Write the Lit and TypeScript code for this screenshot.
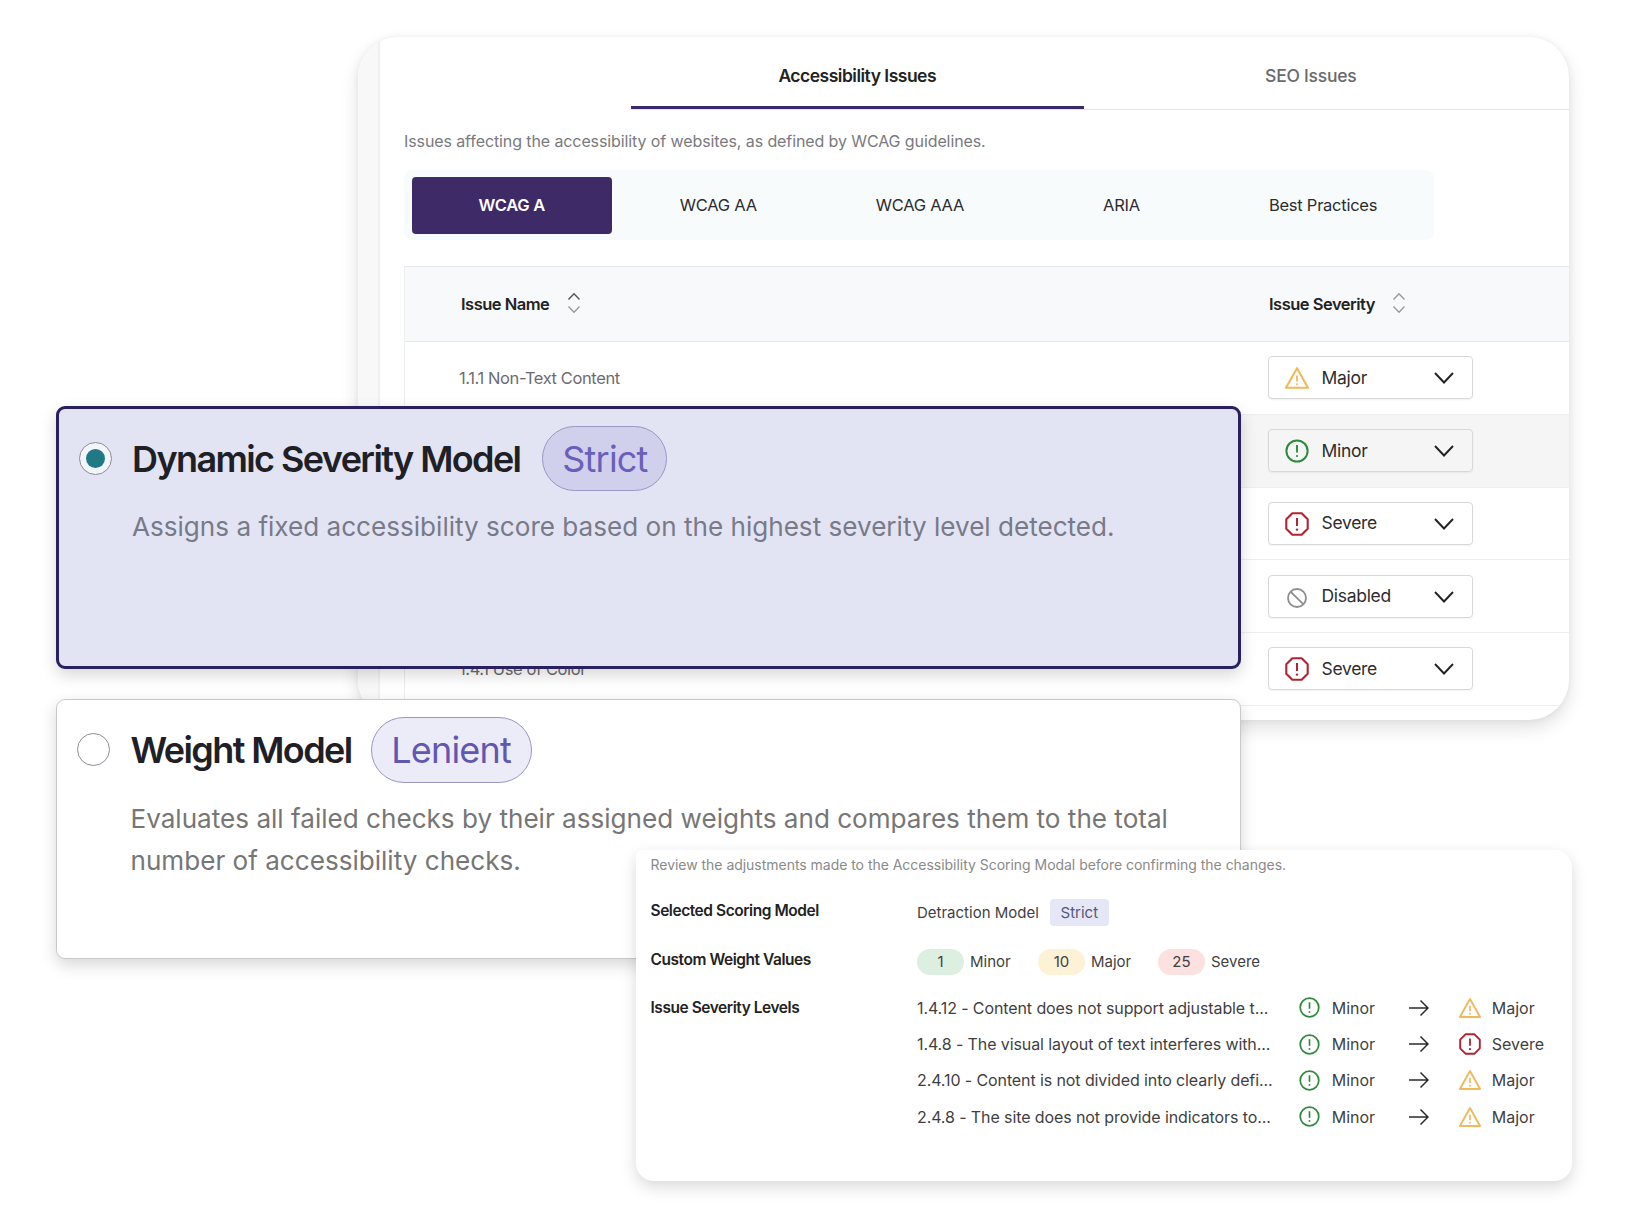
import { LitElement, html, css, svg } from "lit";
import { customElement } from "lit/decorators.js";

type Sev = "Major" | "Minor" | "Severe" | "Disabled";

const icon = (s: Sev, size: number) => {
  const c: Record<Sev, ReturnType<typeof svg>> = {
    Major: svg`<path d="M12 2.2 L23 21.8 H1 Z" fill="none" stroke="#f0b95c" stroke-width="2.1" stroke-linejoin="round"/><path d="M12 9.5V15.5" stroke="#f0b95c" stroke-width="1.8"/><circle cx="12" cy="18.3" r="1" fill="#f0b95c"/>`,
    Minor: svg`<circle cx="12" cy="12" r="10.6" fill="none" stroke="#2f8a3c" stroke-width="2"/><path d="M12 6V13.5" stroke="#2f8a3c" stroke-width="1.9"/><circle cx="12" cy="17" r="1.1" fill="#2f8a3c"/>`,
    Severe: svg`<path d="M7.3 1.3h9.4l6 6v9.4l-6 6H7.3l-6-6V7.3z" fill="none" stroke="#b3232f" stroke-width="2.1" stroke-linejoin="round"/><path d="M12 6V14" stroke="#b3232f" stroke-width="2"/><circle cx="12" cy="17.6" r="1.2" fill="#b3232f"/>`,
    Disabled: svg`<circle cx="12" cy="13" r="9" fill="none" stroke="#8f8f8f" stroke-width="1.8"/><path d="M5.8 6.8L18.2 19.2" stroke="#8f8f8f" stroke-width="1.8"/>`,
  };
  return html`<svg class="ic" width=${size} height=${size} viewBox="0 0 24 24">${c[s]}</svg>`;
};

const sortIcon = (top: string) =>
  html`<svg class="sort" width="14" height="22" viewBox="0 0 14 22" fill="none"><path d="M1.5 7.5L7 1.8L12.5 7.5" stroke=${top} stroke-width="1.4"/><path d="M1.5 14.5L7 20.2L12.5 14.5" stroke="#9a9a9a" stroke-width="1.4"/></svg>`;

const chevron = html`<svg class="chev" width="20" height="12" viewBox="0 0 20 12" fill="none"><path d="M1 1L10 10.5L19 1" stroke="#222" stroke-width="1.9"/></svg>`;

const arrow = html`<svg width="20" height="18" viewBox="0 0 20 18" fill="none"><path d="M0 9H19M11.5 1.5L19 9L11.5 16.5" stroke="#2b2b2b" stroke-width="1.5"/></svg>`;

const tableRows: { name: string; sev: Sev; hover?: boolean }[] = [
  { name: "1.1.1 Non-Text Content", sev: "Major" },
  { name: "", sev: "Minor", hover: true },
  { name: "", sev: "Severe" },
  { name: "", sev: "Disabled" },
  { name: "1.4.1 Use of Color", sev: "Severe" },
];

const levels: { text: string; to: Sev }[] = [
  { text: "1.4.12 - Content does not support adjustable t...", to: "Major" },
  { text: "1.4.8 - The visual layout of text interferes with...", to: "Severe" },
  { text: "2.4.10 - Content is not divided into clearly defi...", to: "Major" },
  { text: "2.4.8 - The site does not provide indicators to...", to: "Major" },
];

@customElement("app-root")
export class AppRoot extends LitElement {
  static styles = css`
    :host {
      display: block;
      position: relative;
      width: 1630px;
      height: 1230px;
      background: #fff;
      overflow: hidden;
      font-family: Inter, "Liberation Sans", sans-serif;
      color: #222;
    }
    .back {
      position: absolute;
      left: 358px;
      top: 37px;
      width: 1211px;
      height: 683px;
      background: #fff;
      border-radius: 40px;
      overflow: hidden;
      display: flex;
      box-shadow: 0 8px 18px rgba(0, 0, 0, 0.12), 0 0 6px rgba(0, 0, 0, 0.06);
    }
    .strip {
      width: 20px;
      flex: none;
      background: #f8f8f8;
      border-right: 2px solid #f0f0f0;
    }
    .main { flex: 1; min-width: 0; }
    .tabs {
      margin-left: 250.5px;
      height: 72px;
      display: flex;
      border-bottom: 1px solid #e4e4e6;
    }
    .tab {
      width: 453.5px;
      height: 71.5px;
      display: flex;
      align-items: center;
      justify-content: center;
      padding-top: 5px;
      box-sizing: border-box;
      font-size: 17.5px;
      letter-spacing: -0.25px;
      color: #6a6a6a;
      font-weight: 500;
    }
    .tab.on {
      color: #222;
      font-weight: 600;
      letter-spacing: -0.5px;
      padding-top: 8px;
      border-bottom: 3px solid #3b2a6b;
    }
    .desc {
      margin: 21px 0 0 24px;
      line-height: 20px;
      font-size: 16px;
      letter-spacing: -0.1px;
      color: #7a7a7e;
    }
    .seg {
      margin: 19px 0 0 24px;
      width: 1030px;
      height: 70px;
      box-sizing: border-box;
      padding: 7px 10px 6px 8px;
      background: #f8fbfc;
      border-radius: 8px;
      display: flex;
    }
    .seg div {
      width: 201.6px;
      display: flex;
      align-items: center;
      justify-content: center;
      padding-bottom: 2px;
      box-sizing: border-box;
      font-size: 16.5px;
      letter-spacing: -0.25px;
      color: #2c2c30;
    }
    .seg .on {
      width: 199.5px;
      margin-right: 6px;
      background: #3f2a68;
      color: #fff;
      font-weight: 600;
      border-radius: 4px;
    }
    .table {
      margin: 26px 0 0 24px;
      border-top: 1px solid #e6e7ea;
      border-left: 1px solid #eceded;
    }
    .thead {
      height: 74px;
      background: #f8f9fb;
      border-bottom: 1px solid #e6e7ea;
      display: grid;
      grid-template-columns: 864px 1fr;
      align-items: center;
      font-size: 16.5px;
      font-weight: 600;
      letter-spacing: -0.5px;
    }
    .th { display: flex; align-items: center; }
    .th:first-child { padding-left: 56px; }
    .th .sort { margin-left: 17px; margin-top: -2px; }
    .th:first-child .sort { margin-left: 18px; }
    .row {
      height: 71.75px;
      border-bottom: 1px solid #eeeef0;
      display: grid;
      grid-template-columns: 862.5px 205px;
      align-items: center;
      font-size: 16.5px;
      letter-spacing: -0.4px;
      color: #6c6c70;
    }
    .row.hover { background: #f5f5f6; }
    .row .name { padding-left: 54px; }
    .dd {
      height: 43px;
      box-sizing: border-box;
      display: flex;
      align-items: center;
      border: 1px solid #d8d8da;
      border-radius: 4px;
      box-shadow: 0 1px 2px rgba(0, 0, 0, 0.06);
      font-size: 17.5px;
      letter-spacing: -0.3px;
      color: #2d2d2f;
      position: relative;
      padding-left: 53px;
    }
    .dd .slot {
      position: absolute;
      left: 16px;
      top: 9px;
      width: 24px;
      height: 24px;
    }
    .dd span { margin-top: -1px; }
    .dd .chev { position: absolute; right: 18px; top: 15px; }

    .card {
      position: absolute;
      left: 56px;
      width: 1185px;
      box-sizing: border-box;
      border-radius: 9px;
      box-shadow: 0 6px 16px rgba(0, 0, 0, 0.16);
    }
    .card.a {
      top: 406px;
      height: 263px;
      background: #e2e4f3;
      border: 3px solid #2a1f5f;
      padding: 17px 0 0 73px;
    }
    .card.b {
      top: 699px;
      height: 260px;
      background: #fff;
      border: 1.5px solid #c9c9c9;
      padding: 17px 0 0 73.5px;
    }
    .radio {
      position: absolute;
      width: 33px;
      height: 33px;
      box-sizing: border-box;
      border-radius: 50%;
      border: 1.5px solid #8b8d94;
      display: flex;
      align-items: center;
      justify-content: center;
    }
    .a .radio { left: 20px; top: 33px; background: #f4f5fb; }
    .b .radio { left: 20px; top: 33px; background: #fff; }
    .radio i {
      width: 19px;
      height: 19px;
      border-radius: 50%;
      background: #1f7a85;
    }
    .head { display: flex; align-items: center; }
    .title {
      font-size: 36px;
      font-weight: 600;
      letter-spacing: -1.6px;
      color: #1f2026;
      line-height: 44px;
    }
    .tag {
      box-sizing: border-box;
      height: 65px;
      border-radius: 33px;
      border: 1.5px solid #9a97c6;
      display: flex;
      align-items: center;
      justify-content: center;
      font-size: 36px;
      letter-spacing: -0.8px;
    }
    .tag.strict {
      margin-left: 22px;
      width: 125px;
      background: #d1d0ec;
      color: #6a5fbb;
    }
    .tag.lenient {
      margin-left: 19px;
      width: 161px;
      height: 66px;
      background: #ecebf8;
      color: #6157b0;
    }
    .cdesc {
      font-size: 26.1px;
      line-height: 42px;
      color: #787a88;
    }
    .a .cdesc { margin-top: 15px; }
    .b .cdesc { margin-top: 15px; color: #767676; max-width: 1060px; }

    .review {
      position: absolute;
      left: 636px;
      top: 850px;
      width: 936px;
      height: 331px;
      box-sizing: border-box;
      background: #fff;
      border-radius: 6px 18px 18px 18px;
      box-shadow: 0 6px 16px rgba(0, 0, 0, 0.15);
      padding: 6px 0 0 14.5px;
      font-size: 16px;
    }
    .note {
      font-size: 14px;
      line-height: 18px;
      letter-spacing: -0.03px;
      color: #8a8a8a;
      margin-bottom: 27px;
    }
    .grid {
      display: grid;
      grid-template-columns: 266.5px 1fr;
      row-gap: 0;
    }
    .lab {
      font-weight: 600;
      font-size: 15.5px;
      letter-spacing: -0.45px;
      color: #222;
      line-height: 20px;
    }
    .val {
      display: flex;
      align-items: center;
      font-size: 15px;
      color: #3f3f42;
    }
    .v1 { height: 27px; margin-top: -2px; margin-bottom: 23.8px; }
    .v2 { height: 26px; margin-top: -1px; margin-bottom: 22.8px; }
    .chip {
      margin-left: 11px;
      width: 59px;
      height: 27px;
      display: flex;
      align-items: center;
      justify-content: center;
      background: #e6e7f6;
      color: #55597a;
      border-radius: 4px;
    }
    .pill {
      width: 47px;
      height: 26px;
      border-radius: 13px;
      display: flex;
      align-items: center;
      justify-content: center;
      margin-right: 6px;
    }
    .wt { width: 68px; }
    .wt.short { width: 67px; }
    .levels { display: flex; flex-direction: column; margin-top: -8px; }
    .lv {
      height: 36.3px;
      display: grid;
      grid-template-columns: 381.5px 33.2px 77.8px 50px 32.3px auto;
      align-items: center;
      color: #3f3f42;
      white-space: nowrap;
    }
    .lv .t { letter-spacing: -0.1px; }
    .lv .ic { display: block; }
    .lv .cell { display: flex; align-items: center; }
  `;

  render() {
    return html`
      <div class="back">
        <div class="strip"></div>
        <div class="main">
          <div class="tabs">
            <div class="tab on">Accessibility Issues</div>
            <div class="tab">SEO Issues</div>
          </div>
          <div class="desc">Issues affecting the accessibility of websites, as defined by WCAG guidelines.</div>
          <div class="seg">
            <div class="on">WCAG A</div>
            <div>WCAG AA</div>
            <div>WCAG AAA</div>
            <div>ARIA</div>
            <div>Best Practices</div>
          </div>
          <div class="table">
            <div class="thead">
              <div class="th">Issue Name ${sortIcon("#555")}</div>
              <div class="th">Issue Severity ${sortIcon("#9a9a9a")}</div>
            </div>
            ${tableRows.map(
              (r) => html`<div class="row ${r.hover ? "hover" : ""}">
                <div class="name">${r.name}</div>
                <div class="dd">
                  <div class="slot">${icon(r.sev, 24)}</div>
                  <span>${r.sev}</span>
                  ${chevron}
                </div>
              </div>`
            )}
          </div>
        </div>
      </div>

      <div class="card a">
        <div class="radio"><i></i></div>
        <div class="head">
          <div class="title">Dynamic Severity Model</div>
          <div class="tag strict">Strict</div>
        </div>
        <div class="cdesc">Assigns a fixed accessibility score based on the highest severity level detected.</div>
      </div>

      <div class="card b">
        <div class="radio"></div>
        <div class="head">
          <div class="title">Weight Model</div>
          <div class="tag lenient">Lenient</div>
        </div>
        <div class="cdesc">Evaluates all failed checks by their assigned weights and compares them to the total number of accessibility checks.</div>
      </div>

      <div class="review">
        <div class="note">Review the adjustments made to the Accessibility Scoring Modal before confirming the changes.</div>
        <div class="grid">
          <div class="lab">Selected Scoring Model</div>
          <div class="val v1">Detraction Model<span class="chip">Strict</span></div>
          <div class="lab">Custom Weight Values</div>
          <div class="val v2">
            <span class="pill" style="background:#dcefe1">1</span><span class="wt">Minor</span>
            <span class="pill" style="background:#fdf2d5">10</span><span class="wt short">Major</span>
            <span class="pill" style="background:#fde0e0">25</span><span>Severe</span>
          </div>
          <div class="lab">Issue Severity Levels</div>
          <div class="levels">
            ${levels.map(
              (l) => html`<div class="lv">
                <div class="t">${l.text}</div>
                <div class="cell">${icon("Minor", 21)}</div>
                <div>Minor</div>
                <div class="cell">${arrow}</div>
                <div class="cell">${icon(l.to, 22)}</div>
                <div>${l.to}</div>
              </div>`
            )}
          </div>
        </div>
      </div>
    `;
  }
}
